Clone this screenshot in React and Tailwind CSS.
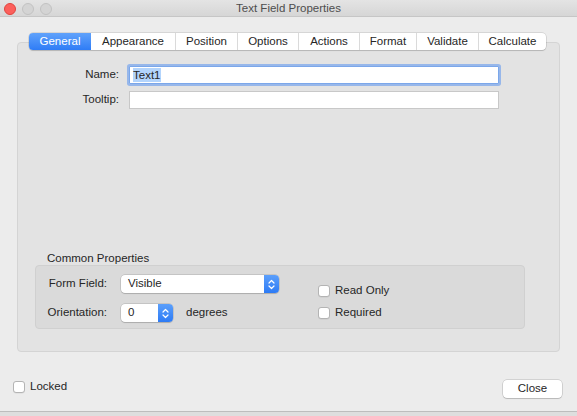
import React from 'react';

const tabs = [
  { label: 'General', w: 'w-[62px]', active: true },
  { label: 'Appearance', w: 'w-[84px]' },
  { label: 'Position', w: 'w-[62px]' },
  { label: 'Options', w: 'w-[61px]' },
  { label: 'Actions', w: 'w-[61px]' },
  { label: 'Format', w: 'w-[57px]' },
  { label: 'Validate', w: 'w-[62px]' },
  { label: 'Calculate', w: 'w-[68px]' },
];

function Arrows() {
  return (
    <svg width="7" height="11" viewBox="0 0 7 11" fill="none" stroke="white" strokeWidth="1.2" strokeLinecap="round" strokeLinejoin="round">
      <path d="M1 4 L3.5 1.5 L6 4" />
      <path d="M1 7 L3.5 9.5 L6 7" />
    </svg>
  );
}

function Checkbox({ label }) {
  return (
    <label className="flex items-center h-[14px] gap-[5px]">
      <span className="w-[12px] h-[12px] bg-white border border-[#b4b4b4] rounded-[3px] shadow-[0_0.5px_0.5px_rgba(0,0,0,0.08)]" />
      <span>{label}</span>
    </label>
  );
}

export default function App() {
  return (
    <div className="w-[577px] h-[416px] bg-[#dedede] font-['Liberation_Sans',Arial,sans-serif] text-[11.5px] text-[#262626]">
      <div className="h-[412px] bg-[#ececec] border-b border-[#bdbdbd] flex flex-col">
        {/* Title bar */}
        <div className="h-[17px] grid grid-cols-[1fr_auto_1fr] items-center border-b border-[#c6c6c6] bg-gradient-to-b from-[#e4e4e4] to-[#d6d6d6]">
          <div className="flex items-center gap-[6px] pl-[4px]">
            <span className="w-[12px] h-[12px] rounded-full bg-[#fc605c] border border-[#e0443e]" />
            <span className="w-[12px] h-[12px] rounded-full bg-[#d4d4d4] border border-[#c2c2c2]" />
            <span className="w-[12px] h-[12px] rounded-full bg-[#d4d4d4] border border-[#c2c2c2]" />
          </div>
          <div className="text-[#4d4d4d]">Text Field Properties</div>
          <div />
        </div>

        <div className="px-[17px] pt-[16px] flex flex-col">
          {/* Tabs */}
          <div className="self-center relative z-10 flex h-[17px] bg-white rounded-[4px] shadow-[0_0_0_0.5px_rgba(0,0,0,0.18),0_1px_1px_rgba(0,0,0,0.12)] -ml-[2px]">
            {tabs.map((t, i) => (
              <div
                key={t.label}
                className={`${t.w} flex items-center justify-center ${
                  t.active
                    ? 'bg-gradient-to-b from-[#60a2fb] to-[#2e7cf6] text-white rounded-l-[4px]'
                    : i > 1
                    ? 'border-l border-[#dadada]'
                    : ''
                } ${i === tabs.length - 1 ? 'rounded-r-[4px]' : ''}`}
              >
                {t.label}
              </div>
            ))}
          </div>

          {/* Panel */}
          <div className="-mt-[8px] h-[310px] bg-[#e3e3e3] border border-[#d4d4d4] rounded-[4px] flex flex-col pt-[23px] pb-[22px]">
            <div className="flex items-center">
              <div className="w-[101px] text-right">Name:</div>
              <div className="ml-[10px] w-[370px] h-[18px] bg-white border border-[#7ba7ea] rounded-[1px] shadow-[0_0_0_2px_rgba(90,148,240,0.55)] flex items-center pl-[3px]">
                <span className="bg-[#b3d4fc] leading-[14px]">Text1</span>
              </div>
            </div>
            <div className="flex items-center mt-[7px]">
              <div className="w-[101px] text-right">Tooltip:</div>
              <div className="ml-[10px] w-[370px] h-[18px] bg-white border border-[#c8c8c8]" />
            </div>

            <div className="flex-1" />

            <div className="ml-[29px] leading-[14px]">Common Properties</div>
            <div className="ml-[17px] w-[490px] h-[64px] bg-[#dadada] border border-[#d0d0d0] rounded-[4px] flex">
              <div className="flex flex-col pt-[9px] gap-[11px]">
                <div className="flex items-center">
                  <div className="w-[71px] text-right">Form Field:</div>
                  <div className="ml-[14px] w-[158px] h-[18px] bg-white rounded-[4px] shadow-[0_0_0_0.5px_rgba(0,0,0,0.2),0_1px_1px_rgba(0,0,0,0.12)] flex items-center">
                    <span className="flex-1 pl-[7px]">Visible</span>
                    <span className="w-[15px] h-full bg-gradient-to-b from-[#5b9ffb] to-[#2d7bf5] rounded-r-[4px] flex items-center justify-center">
                      <Arrows />
                    </span>
                  </div>
                </div>
                <div className="flex items-center">
                  <div className="w-[71px] text-right">Orientation:</div>
                  <div className="ml-[14px] w-[52px] h-[18px] bg-white rounded-[4px] shadow-[0_0_0_0.5px_rgba(0,0,0,0.2),0_1px_1px_rgba(0,0,0,0.12)] flex items-center">
                    <span className="flex-1 pl-[7px]">0</span>
                    <span className="w-[15px] h-full bg-gradient-to-b from-[#5b9ffb] to-[#2d7bf5] rounded-r-[4px] flex items-center justify-center">
                      <Arrows />
                    </span>
                  </div>
                  <span className="ml-[13px]">degrees</span>
                </div>
              </div>
              <div className="ml-[39px] pt-[18px] flex flex-col gap-[8px]">
                <Checkbox label="Read Only" />
                <Checkbox label="Required" />
              </div>
            </div>
          </div>
        </div>

        {/* Bottom bar */}
        <div className="flex-1 flex items-center justify-between pl-[13px] pr-[15px] pt-[14px]">
          <div className="-mt-[3px]">
            <Checkbox label="Locked" />
          </div>
          <button className="w-[59px] h-[18px] bg-white rounded-[4px] shadow-[0_0_0_0.5px_rgba(0,0,0,0.22),0_1px_1px_rgba(0,0,0,0.12)] flex items-center justify-center">
            Close
          </button>
        </div>
      </div>
    </div>
  );
}
